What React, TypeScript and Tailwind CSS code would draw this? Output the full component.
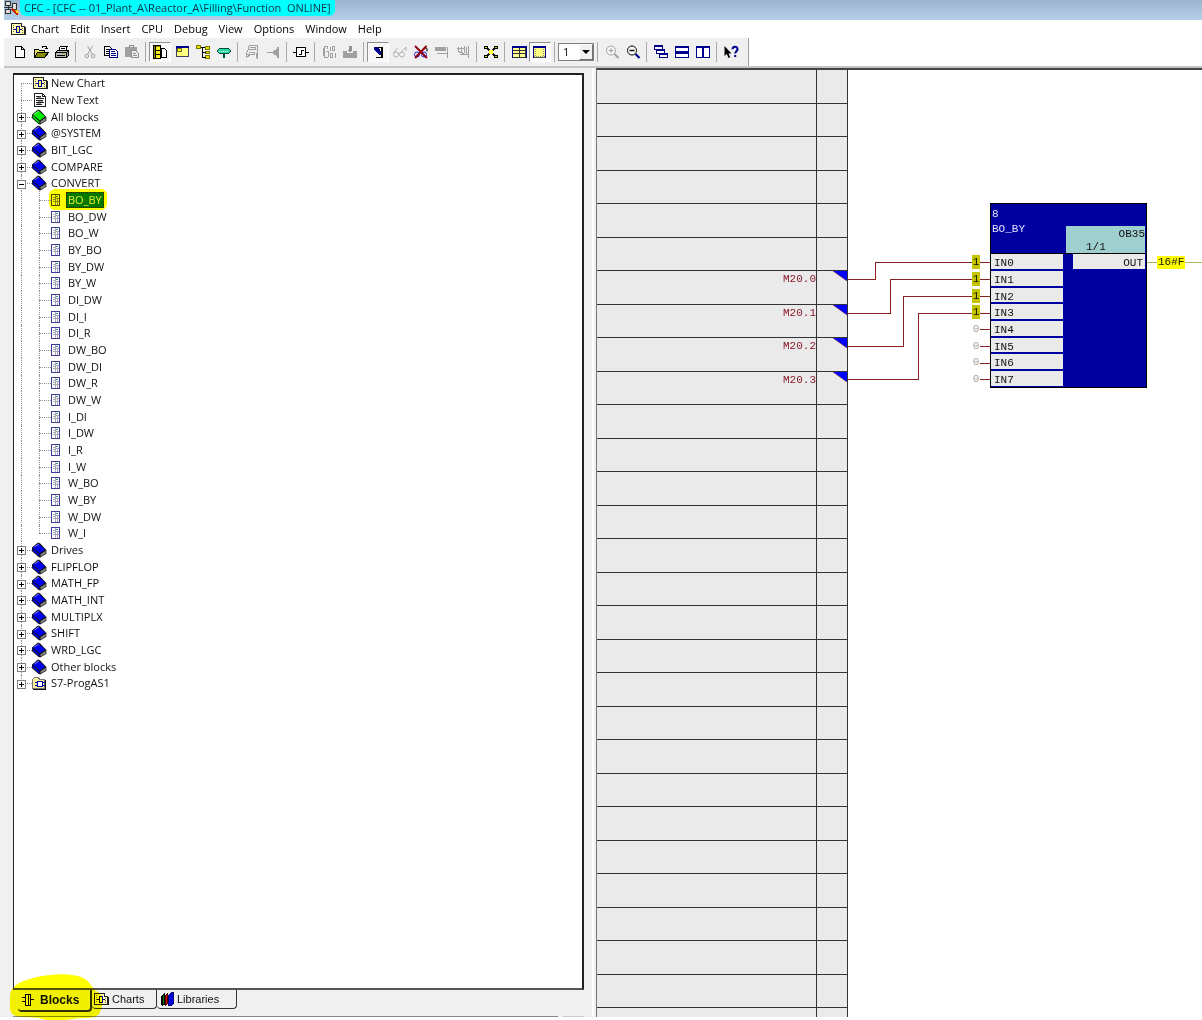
import { useState } from "react";
import type { ReactNode } from "react";
import clsx from "clsx";

const menus = ["Chart", "Edit", "Insert", "CPU", "Debug", "View", "Options", "Window", "Help"];

function Icon({ children, className = "size-4" }: { children: ReactNode; className?: string }) {
  return (
    <svg viewBox="0 0 16 16" className={clsx("shrink-0", className)} fill="none" stroke="#000" shapeRendering="crispEdges" aria-hidden="true">
      {children}
    </svg>
  );
}

const ChartIcon = () => (
  <Icon>
    <path d="M1.5 2.5h10l3 3v8h-13z" fill="#fffbb0" stroke="#222" />
    <path d="M11.5 2.5v3h3" fill="#fff" stroke="#222" />
    <path d="M14.5 6v8" stroke="#222" strokeWidth="2" />
    <path d="M4 8.5h2M10 8.5h2" stroke="#0000a0" />
    <path d="M6.5 5.5h3v6h-3z" fill="#ffff60" stroke="#0000a0" />
    <path d="M3.5 4v8M12.5 7v5" stroke="#666" strokeDasharray="1 1" />
  </Icon>
);

const TextIcon = () => (
  <Icon>
    <path d="M2.5 1.5h8l3 3v10h-11z" fill="#fff" stroke="#222" />
    <path d="M10.5 1.5v3h3M4 4.5h5M4 6.5h8M4 8.5h7M4 10.5h8M4 12.5h6" stroke="#222" />
    <path d="M5 5.5h4M6 9.5h5M5 11.5h4" stroke="#999" />
  </Icon>
);

const BookIcon = ({ color }: { color: string }) => (
  <svg viewBox="0 0 16 16" className="size-4 shrink-0" aria-hidden="true">
    <path d="M0 5.4L6 .6 8 1.200 14.400 8v3.800L8.200 15.400 6.600 15 0 9.200z" fill="#111" />
    <path d="M.8 5.400L6.200 1.400 13.200 7.600 7.800 11.400z" fill={color} />
    <path d="M8.400 12.400L13.600 8.800v2.600L8.600 14.600z" fill="#888" />
    <path d="M.7 6.600L7.400 12.400v2L.8 8.800z" fill={color} />
    <path d="M2.400 5L7 1.800" stroke="#fff" strokeWidth=".5" />
  </svg>
);

const FolderIcon = () => (
  <Icon>
    <path d="M.5 13.5v-9l2-2h4l1 2h5v9z" fill="#f5ef9a" stroke="#777" />
    <path d="M13.5 5v9.5H1" stroke="#111" />
    <path d="M5.5 6.5h5v5h-5z" fill="#fff" stroke="#0000a0" strokeWidth="1.5" />
    <path d="M3 7.5h2M3 10.5h2M11 7.5h2M11 10.5h2" stroke="#0000a0" />
  </Icon>
);

const FunctionIcon = ({ selected }: { selected?: boolean }) => (
  <svg viewBox="1 0 11 14" className="h-[14px] w-[11px] shrink-0" shapeRendering="crispEdges" fill="none" aria-hidden="true">
    <path d="M1.5 1.5h8v11h-8z" fill={selected ? "#ffff00" : "#fff"} stroke={selected ? "#4a4a00" : "#3c3c96"} />
    <path d="M5.5 2v10M3 4.5h2M3 6.5h2M3 8.5h2M6 5.5h3M6 8.5h3M7.5 5v7" stroke={selected ? "#8a8a00" : "#a8a8b8"} />
    <path d="M6 3.5h2" stroke={selected ? "#4a7a00" : "#2aa08a"} />
  </svg>
);

type Tool = { name: string; icon: ReactNode; pressed?: boolean };

const gray = "#a0a0a0";
const navy = "#000090";

const toolGroups: Tool[][] = [
  [
    { name: "New", icon: <path d="M3.5 2.5h6l3 3v8h-9zM9.5 2.5v3h3" fill="#fff" /> },
    {
      name: "Open",
      icon: (
        <>
          <path d="M1.5 13V5.5h4l1 1h5V9" fill="#e8e060" />
          <path d="M1.5 13.5l3-5h11l-4 5z" fill="#8a8a00" />
          <path d="M9.5 4V2.5h4V5M12 4.5h3" />
        </>
      ),
    },
    {
      name: "Print",
      icon: (
        <>
          <path d="M4.5 7l2-5h7l-2 5" fill="#fff" />
          <path d="M7 4.5h4M6 6.5h4" />
          <path d="M1.5 8.5l2-2h11v5l-2 2h-11z" fill="#b8b8b8" />
          <path d="M1.5 8.5h11v5M12.5 8.5l2-2M3 11.5h8" />
          <path d="M9 10.5h2" stroke="#c8c800" />
        </>
      ),
    },
  ],
  [
    {
      name: "Cut",
      icon: (
        <g stroke={gray} shapeRendering="auto">
          <path d="M5.5 2l5 8.5M10.5 2l-5 8.5" />
          <circle cx="4.8" cy="12" r="1.8" />
          <circle cx="11.2" cy="12" r="1.8" />
        </g>
      ),
    },
    {
      name: "Copy",
      icon: (
        <>
          <path d="M1.5 2.5h5l2 2v7h-7z" fill="#fff" />
          <path d="M3 5.5h3M3 7.5h4M3 9.5h4" />
          <path d="M6.5 5.5h6l2 2v6h-8z" fill="#fff" stroke={navy} />
          <path d="M8 7.5h4M8 9.5h5M8 11.5h5" stroke={navy} />
        </>
      ),
    },
    {
      name: "Paste",
      icon: (
        <>
          <path d="M1.5 3.5h11v9h-11z" fill={gray} stroke={gray} />
          <path d="M5 3.5V1.5h4v2" stroke="#888" />
          <path d="M7.5 6.5h4l3 3v4h-7z" fill="#eee" stroke="#909090" />
          <path d="M9 9.5h3M9 11.5h4" stroke="#909090" />
        </>
      ),
    },
  ],
  [
    {
      name: "Catalog",
      pressed: true,
      icon: (
        <>
          <path d="M1.5 1.5h7v13h-7z" fill="#8a8a00" />
          <path d="M4 3h4v3H4zM4 7h4v3H4zM4 11h4v3H4z" fill="#ffee20" stroke="none" />
          <path d="M3.5 2v12M8.5 2v12M4 6.5h4M4 10.5h4" />
          <path d="M9.5 4.5h3l2 2v7h-5z" fill="#fff" />
        </>
      ),
    },
    {
      name: "Overview",
      icon: (
        <>
          <path d="M2.5 2.5h12v10h-12z" fill="#ffff80" stroke="#404060" />
          <path d="M2 2.5h13M2 3.5h13M2 4.5h5" stroke={navy} />
          <path d="M3 4.500h4v3H3z" fill="#ffff00" stroke="#707020" />
        </>
      ),
    },
    {
      name: "Hierarchy",
      icon: (
        <>
          <path d="M1.5 1.5h4v3h-4zM10.5 2.5h4v3h-4zM10.5 7.5h4v2h-4zM10.5 11.5h4v3h-4z" fill="#e8e000" stroke="#777700" />
          <path d="M6 3.5h4M7.5 4v9h3M7.5 8.5h3" />
        </>
      ),
    },
    {
      name: "Run sequence",
      icon: (
        <>
          <path d="M3.5 4.5h9l2 2v1l-2 2h-9l-2-2v-1z" fill="#30d8a0" stroke="#005040" />
          <path d="M3 7h10" stroke="#d0fff0" strokeDasharray="1 1" />
          <path d="M8 10v4" stroke="#005040" strokeWidth="2" />
        </>
      ),
    },
  ],
  [
    {
      name: "Go to chart",
      icon: <path d="M4.500 1.500h9v13M4.500 1.500v4h7v-3M4.500 5.500l-2 3v2h8v-3M2.500 10.500v3l4-3M6 3.500h5M5 8.500h5M12.500 9v5" stroke={gray} />,
    },
    {
      name: "Go to end",
      icon: (
        <>
          <path d="M2 8.500h6M13 3v11" stroke={gray} strokeWidth="1.500" />
          <path d="M7 8.500l5-3v6z" fill={gray} stroke={gray} />
        </>
      ),
    },
  ],
  [
    {
      name: "Block",
      icon: (
        <>
          <path d="M3.500 3.500h9v9h-9z" fill="#fff" stroke="#000" strokeWidth="1.500" />
          <path d="M0 8.500h3M13 8.500h3M6 10.500h2.500v-4H11" />
        </>
      ),
    },
  ],
  [
    {
      name: "Compile",
      icon: <path d="M7 2.500H3.500v11H7M2.500 4v8M4.500 7.500h3v5M6.500 3v2M9.500 2.500v4M11.500 2.500h2v4h-2zM9.500 9.500h2v4h-2zM14.500 9v5" stroke={gray} />,
    },
    {
      name: "Download",
      icon: (
        <>
          <path d="M1.500 7.500h3v2h7v-2h3v6h-13z" fill={gray} stroke={gray} />
          <path d="M6.500 1.500h3v4h2l-3.500 3-3.500-3h2z" fill="#909090" stroke="none" />
        </>
      ),
    },
  ],
  [
    {
      name: "Test mode",
      pressed: true,
      icon: (
        <>
          <path d="M5.500 3.500h6v10h-6" fill="#f8f8e0" />
          <path d="M4 3h3l4 5v2H9L4 5z" fill={navy} stroke={navy} />
          <path d="M12 3v11" strokeWidth="2" />
          <path d="M7 13.500h5" />
        </>
      ),
    },
    {
      name: "Watch on",
      icon: (
        <g stroke="#b4b4b4" shapeRendering="auto">
          <circle cx="4" cy="10.500" r="2.500" />
          <circle cx="10" cy="10.500" r="2.500" />
          <path d="M1.500 9l4-5M9 8l5-5v4" />
        </g>
      ),
    },
    {
      name: "Watch off",
      icon: (
        <g shapeRendering="auto">
          <circle cx="4" cy="10.500" r="2.500" stroke="#2020d0" />
          <circle cx="11" cy="10.500" r="2.500" stroke="#2020d0" />
          <path d="M12 3.500l2 1v3" />
          <path d="M2 2l12 12M13.500 2L2 14" stroke="#900010" strokeWidth="2" />
        </g>
      ),
    },
    {
      name: "Row on",
      icon: <path d="M1 4h11M1 6h11M3 9.500h10M13.500 3v11" stroke={gray} strokeWidth="1.800" />,
    },
    {
      name: "Row off",
      icon: <path d="M3.500 3v4M2 4.500h8M6.500 2.500v5M9.500 2v7M3 7.500l6 2M5 10.500h8M13.500 2v12M11.500 3v7" stroke={gray} />,
    },
  ],
  [
    {
      name: "Connections",
      icon: (
        <>
          <path d="M3 3l10 10M13 3L3 13" stroke="#222" strokeWidth="2.500" />
          <path d="M1.500 2.500h3v2h-3zM11.500 2.500h3v2h-3zM1.500 11.500h3v2h-3zM11.500 11.500h3v2h-3z" fill="#e0e000" />
          <path d="M6 6h4v4H6z" fill="#ffff30" stroke="none" />
        </>
      ),
    },
  ],
  [
    {
      name: "Sheet overview",
      icon: (
        <>
          <path d="M1.500 2.500h13v11h-13z" fill="#ffff90" stroke="#333" />
          <path d="M1 2.500h14M1 3.500h14" stroke={navy} />
          <path d="M2 6.500h12M2 9.500h12M8.500 4v9" stroke="#333" />
          <path d="M1 2v12M15 2v12" stroke={navy} />
        </>
      ),
    },
    {
      name: "Sheet",
      pressed: true,
      icon: (
        <>
          <path d="M1.500 2.500h12v11h-12z" fill="#ffff80" stroke="#555" />
          <path d="M1 2.500h13M1 3.500h13" stroke={navy} />
          <path d="M1.500 4v10M13.500 4v10" stroke={navy} />
          <path d="M3.500 5v8M11.500 5v8M2 12.500h11" stroke="#888" strokeDasharray="1 1" />
        </>
      ),
    },
  ],
];

const zoomTools: Tool[][] = [
  [
    {
      name: "Zoom in",
      icon: (
        <g stroke={gray} shapeRendering="auto">
          <circle cx="7" cy="6.500" r="4.500" fill="#f8f8f8" />
          <path d="M4.500 6.500h5M7 4v5" />
          <path d="M10.500 10l4 4" strokeWidth="2" />
        </g>
      ),
    },
    {
      name: "Zoom out",
      icon: (
        <g shapeRendering="auto">
          <circle cx="7" cy="6.500" r="4.500" fill="#fff" />
          <path d="M4.500 6.500h5" strokeWidth="1.500" />
          <path d="M10.500 10l4 4" stroke={navy} strokeWidth="2.200" />
        </g>
      ),
    },
  ],
  [
    {
      name: "Cascade",
      icon: (
        <>
          <path d="M1.500 1.500h8v4h-8zM3.500 5.500h8v4h-8zM6.500 9.500h8v4h-8z" fill="#fff" stroke={navy} />
          <path d="M1 2.500h9M3 6.500h9M6 10.500h9" stroke={navy} />
        </>
      ),
    },
    {
      name: "Tile horizontally",
      icon: (
        <>
          <path d="M1.500 2.500h13v5h-13zM1.500 8.500h13v5h-13z" fill="#fff" stroke={navy} />
          <path d="M1 3.500h14M1 9.500h14" stroke={navy} />
        </>
      ),
    },
    {
      name: "Tile vertically",
      icon: (
        <>
          <path d="M1.500 2.500h6v11h-6zM8.500 2.500h6v11h-6z" fill="#fff" stroke={navy} />
          <path d="M1 3.500h14" stroke={navy} />
        </>
      ),
    },
  ],
  [
    {
      name: "Context help",
      icon: (
        <g shapeRendering="auto">
          <path d="M1.500 2v10l2.300-2 1.700 4 1.700-.8-1.700-3.700h3z" fill="#000" stroke="none" />
          <path d="M9.500 5.200c0-3.400 5-3.400 5 0 0 2-2.300 2-2.300 4.300M12.200 11v2" stroke={navy} strokeWidth="2" />
        </g>
      ),
    },
  ],
];

function Separator() {
  return <span className="flex h-5 w-[7px] shrink-0 justify-center"><span className="w-px bg-[#a8a8a8]" /></span>;
}

function ToolGroup({ tools }: { tools: Tool[] }) {
  return (
    <div className="flex shrink-0">
      {tools.map((tool) => (
        <button
          key={tool.name}
          type="button"
          aria-label={tool.name}
          aria-pressed={tool.pressed}
          className={clsx(
            "flex h-5 items-center justify-center",
            tool.pressed ? "w-[22px] border border-t-[#909090] border-r-white border-b-white border-l-[#909090] bg-[#f8f8f8]" : "w-[21px]",
          )}
        >
          <Icon>{tool.icon}</Icon>
        </button>
      ))}
    </div>
  );
}

function Toolbar() {
  return (
    <div className="ml-1 flex border-b-2 border-[#c4c4c4]">
      <div className="flex h-7 items-center border-r border-[#a0a0a0] bg-[#f0f0f0] pr-[7px] pl-[5px]">
        {toolGroups.map((tools) => (
          <div key={tools[0].name} className="flex">
            <ToolGroup tools={tools} />
            <Separator />
          </div>
        ))}
        <div className="relative">
          <select aria-label="Sheet layer" className="block h-[18px] w-9 appearance-none border border-[#808080] bg-white pl-1 font-['Open_Sans',sans-serif] text-[11px] leading-4" defaultValue="1">
            <option>1</option>
            <option>2</option>
          </select>
          <span className="pointer-events-none absolute top-px right-px flex h-4 w-[14px] items-center justify-center border border-t-white border-r-[#707070] border-b-[#707070] border-l-white bg-[#f0f0f0]">
            <span className="border-x-4 border-t-4 border-x-transparent border-t-black" />
          </span>
        </div>
        {zoomTools.map((tools) => (
          <div key={tools[0].name} className="flex">
            <Separator />
            <ToolGroup tools={tools} />
          </div>
        ))}
      </div>
    </div>
  );
}

type TreeItem = { label: string; kind: "chart" | "text" | "all" | "book" | "folder" | "fn"; open?: boolean };

const convertBlocks = [
  "BO_BY", "BO_DW", "BO_W", "BY_BO", "BY_DW", "BY_W", "DI_DW", "DI_I", "DI_R", "DW_BO", "DW_DI",
  "DW_R", "DW_W", "I_DI", "I_DW", "I_R", "I_W", "W_BO", "W_BY", "W_DW", "W_I",
];

const treeItems: TreeItem[] = [
  { label: "New Chart", kind: "chart" },
  { label: "New Text", kind: "text" },
  { label: "All blocks", kind: "all" },
  { label: "@SYSTEM", kind: "book" },
  { label: "BIT_LGC", kind: "book" },
  { label: "COMPARE", kind: "book" },
  { label: "CONVERT", kind: "book", open: true },
  ...convertBlocks.map((label): TreeItem => ({ label, kind: "fn" })),
  { label: "Drives", kind: "book" },
  { label: "FLIPFLOP", kind: "book" },
  { label: "MATH_FP", kind: "book" },
  { label: "MATH_INT", kind: "book" },
  { label: "MULTIPLX", kind: "book" },
  { label: "SHIFT", kind: "book" },
  { label: "WRD_LGC", kind: "book" },
  { label: "Other blocks", kind: "book" },
  { label: "S7-ProgAS1", kind: "folder" },
];

function ItemIcon({ kind, selected }: { kind: TreeItem["kind"]; selected: boolean }) {
  if (kind === "chart") return <ChartIcon />;
  if (kind === "text") return <TextIcon />;
  if (kind === "folder") return <FolderIcon />;
  if (kind === "fn") return <FunctionIcon selected={selected} />;
  return <BookIcon color={kind === "all" ? "#00f000" : "#0000f0"} />;
}

function BlockTree() {
  const [selected, setSelected] = useState("BO_BY");

  return (
    <ul className="text-[11px] leading-4 text-[#111]">
      {treeItems.map((item, i) => {
        const child = item.kind === "fn";
        const expandable = !child && item.kind !== "chart" && item.kind !== "text";
        const isSelected = item.label === selected;
        const first = i === 0;
        const last = i === treeItems.length - 1;
        const lastChild = child && treeItems[i + 1].kind !== "fn";
        return (
          <li key={item.label} className={clsx("flex items-center", i % 3 === 0 ? "h-4" : "h-[17px]")}>
            <span className="relative h-full w-[18px] shrink-0">
              <span className={clsx("absolute left-[7px] border-l border-dotted border-[#909090]", first ? "top-1/2" : "top-0", last ? "bottom-1/2" : "bottom-0")} />
              {!child && <span className="absolute top-1/2 right-0 left-[7px] border-t border-dotted border-[#909090]" />}
              {expandable && (
                <button type="button" aria-label={`${item.open ? "Collapse" : "Expand"} ${item.label}`} className="absolute top-[5px] left-[3px] size-[9px] border border-[#808080] bg-white">
                  <span className="absolute top-[3px] left-px h-px w-[5px] bg-black" />
                  {!item.open && <span className="absolute top-px left-[3px] h-[5px] w-px bg-black" />}
                </button>
              )}
            </span>
            {child && (
              <span className="relative h-full w-[19px] shrink-0">
                <span className={clsx("absolute top-0 left-[7px] border-l border-dotted border-[#909090]", lastChild ? "bottom-1/2" : "bottom-0")} />
                <span className="absolute top-1/2 right-0 left-[7px] border-t border-dotted border-[#909090]" />
              </span>
            )}
            <span className={clsx("flex h-full items-center", child && isSelected && "rounded-sm bg-[#ffff00] pr-px ring-2 ring-[#ffff00]")}>
              <ItemIcon kind={item.kind} selected={isSelected} />
              <button
                type="button"
                onClick={() => setSelected(item.label)}
                className={clsx(
                  "whitespace-nowrap px-0.5",
                  child ? "ml-1" : "ml-px",
                  isSelected && "bg-[#007800] text-[#e8f020] outline-1 -outline-offset-1 outline-dotted outline-[#402000]",
                )}
              >
                {item.label}
              </button>
            </span>
          </li>
        );
      })}
    </ul>
  );
}

function CatalogTabs() {
  return (
    <div className="relative ml-[5px] flex h-[26px] items-start font-['Liberation_Sans',Arial,sans-serif] text-[11px] text-[#111]">
      <svg viewBox="0 0 94 46" className="pointer-events-none absolute -top-4 -left-[9px] z-10 h-[46px] w-[94px] mix-blend-multiply" aria-hidden="true">
        <path d="M1 23C1 12 10 8 24 4 44-1 66-1 76 5c6 4 7 10 13 13 6 3 5 16 1 22-5 6-16 3-26 5-14 2-26 2-34-1-10-1-22 0-27-4C0 36 1 28 1 23z" fill="#ffff00" />
      </svg>
      <button type="button" className="flex h-[22px] w-[74px] items-center gap-1 rounded-b-sm border-r-2 border-b-2 border-[#333] bg-[#f0f0f0] pl-0.5 text-xs font-bold">
        <Icon>
          <path d="M5.500 2.500h5v11h-5z" fill="#fff" />
          <path d="M8.500 3v10M2 5.500h3M2 9.500h3M11 7.500h3" />
        </Icon>
        Blocks
      </button>
      <button type="button" className="flex h-[19px] w-[65px] items-center gap-[3px] rounded-b-sm border-r border-b border-[#333] bg-[#f0f0f0] pl-px">
        <ChartIcon />
        Charts
      </button>
      <button type="button" className="flex h-[19px] w-20 items-center gap-px rounded-b-sm border-r border-b border-[#333] bg-[#f0f0f0] pl-[3px]">
        <Icon>
          <path d="M2.500 4.500l2-2v10l-2 2z" fill="#008000" />
          <path d="M5.500 4.500l2-2v10l-2 2z" fill="#e00000" stroke="#500000" />
          <path d="M8.500 4.500l3-3h2v11l-2 2h-3z" fill="#0000e0" stroke="#000060" />
          <path d="M1 5v9M4.500 3v11" />
        </Icon>
        Libraries
      </button>
    </div>
  );
}

const signals: Record<number, string> = { 6: "M20.0", 7: "M20.1", 8: "M20.2", 9: "M20.3" };

function SheetMargin() {
  return (
    <table className="w-[251px] shrink-0 border-separate border-spacing-0 self-start bg-[#eaeaea] text-[#8b1a2b]">
      <tbody>
        {Array.from({ length: 29 }, (_, i) => (
          <tr key={i} className={i % 2 ? "h-[33px]" : "h-[34px]"}>
            <td className="border-r border-b border-[#333] p-0 pt-0.5 text-right align-top leading-3">{signals[i]}</td>
            <td className="w-[31px] border-r border-b border-[#333] p-0 align-top">
              {signals[i] && (
                <svg viewBox="0 0 14 10" className="ml-auto h-[10px] w-[14px]" aria-hidden="true">
                  <path d="M0 0h14v10z" fill="#0000ff" />
                  <path d="M0 0l14 10" stroke="#8b1a2b" strokeWidth=".6" />
                </svg>
              )}
            </td>
          </tr>
        ))}
      </tbody>
    </table>
  );
}

const inputs = [1, 1, 1, 1, 0, 0, 0, 0];

function FunctionBlock() {
  return (
    <div className="absolute top-[133px] left-[142px] w-[157px] border border-black bg-[#0000a0] text-[#111]">
      <div className="flex h-[50px] justify-between border-b border-black">
        <div className="pt-[3px] pl-px leading-[15px] text-[#e0e0ff]">
          <div>8</div>
          <div>BO_BY</div>
        </div>
        <div className="mt-[22px] mr-px w-[79px] bg-[#9fcfcf] leading-[13px]">
          <div className="pt-0.5 text-right">OB35</div>
          <div className="pl-5">1/1</div>
        </div>
      </div>
      <div className="flex items-start justify-between">
        <div className="w-[72px]">
          {inputs.map((value, i) => (
            <div key={i} className={clsx("relative border-b-2 border-[#0000a0] last:h-4 last:border-b", i % 3 === 2 ? "h-4" : "h-[17px]")}>
              <div className="h-full bg-[#eaeaea] pl-[3px] leading-[19px]">IN{i}</div>
              <span className={clsx("absolute top-px right-full mr-[11px] w-2 text-center leading-[14px]", value ? "bg-[#c4c400]" : "bg-white text-[#a0a0a0]")}>
                {value}
              </span>
            </div>
          ))}
        </div>
        <div className="mr-px h-[15px] w-[72px] bg-[#eaeaea] pr-0.5 text-right leading-[19px]">OUT</div>
      </div>
      <span className="absolute top-[52px] left-full ml-[11px] bg-[#ffff00] px-px leading-[13px]">16#F</span>
    </div>
  );
}

function ChartCanvas() {
  return (
    <section className="relative min-w-0 flex-1 overflow-hidden bg-white">
      <svg className="absolute inset-0 size-full" fill="none" stroke="#8b2020" shapeRendering="crispEdges" aria-hidden="true">
        <path d="M0 209.500H27.500V192.500H142" />
        <path d="M0 243.500H42.500V209.500H142" />
        <path d="M0 276.500H55.500V226.500H142" />
        <path d="M0 309.500H70.500V243.500H142" />
        <path d="M132 259.500H142M132 276.500H142M132 293.500H142M132 309.500H142" />
        <path d="M299 192.500H2000" stroke="#b4b460" />
      </svg>
      <FunctionBlock />
    </section>
  );
}

export default function App() {
  return (
    <div className="flex h-screen flex-col overflow-hidden bg-white pb-[3px] font-['Open_Sans','Segoe_UI',sans-serif] text-black">
      <header className="ml-1 flex h-5 shrink-0 items-start bg-linear-to-b from-[#9ab3cf] to-[#b6cee8]">
        <Icon>
          <path d="M1.500 1.500h5v4h-5zM1.500 9.500h5v4h-5zM8.500 3.500h4v6h-4z" fill="#ddd" stroke="#333" />
          <path d="M0 7.500h8M4.500 6v3" stroke="#333" />
          <path d="M8 9l6 6" stroke="#d02000" strokeWidth="2" />
          <path d="M12 10l2 3" stroke="#ffd000" strokeWidth="2" />
        </Icon>
        <h1 className="whitespace-pre rounded-b-md bg-[#00ffff] px-1 pb-px text-[11px] leading-[15px] text-[#103040]">
          {"CFC - [CFC -- 01_Plant_A\\Reactor_A\\Filling\\Function  ONLINE]"}
        </h1>
      </header>

      <nav className="flex h-[18px] shrink-0 items-center gap-[11px] pl-[10px] text-[11px] leading-4">
        <span className="-mr-[6px]"><ChartIcon /></span>
        {menus.map((menu) => (
          <button key={menu} type="button">{menu}</button>
        ))}
      </nav>

      <Toolbar />

      <main className="flex min-h-0 flex-1">
        <aside className="flex w-[594px] shrink-0 flex-col border-r-2 border-white bg-[#f0f0f0] pt-[5px] pl-[13px]">
          <div className="mr-2 min-h-0 flex-1 overflow-hidden border-t-2 border-r-2 border-b-2 border-l border-[#222] border-b-[#555] bg-white">
            <BlockTree />
          </div>
          <CatalogTabs />
          <div className="mr-2 flex justify-between">
            <span className="h-px w-[545px] bg-[#888]" />
            <span className="h-px w-[21px] bg-[#ccc]" />
          </div>
        </aside>
        <div className="flex min-w-0 flex-1 bg-[#f0f0f0] pl-0.5">
          <div className="flex min-w-0 flex-1 overflow-hidden border-t-2 border-l border-t-[#444] border-l-[#777] font-['Liberation_Mono','Courier_New',monospace] text-[11px]">
            <SheetMargin />
            <ChartCanvas />
          </div>
        </div>
      </main>
    </div>
  );
}
